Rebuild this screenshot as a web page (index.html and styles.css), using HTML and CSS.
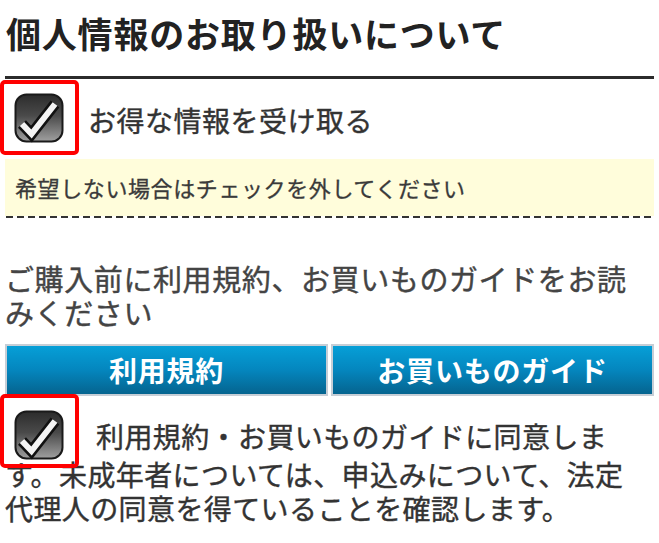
FILE: index.html
```
<!DOCTYPE html>
<html lang="ja">
<head>
<meta charset="utf-8">
<title>個人情報のお取り扱いについて</title>
<link rel="stylesheet" href="styles.css">
</head>
<body>
<div class="page">
  <h1 class="title">個人情報のお取り扱いについて</h1>
  <div class="opt">
    <span class="cb cb-opt"><svg class="cb-svg" viewBox="0 0 50 50" width="50" height="50"><defs><linearGradient id="g1" x1="0" y1="0" x2="0" y2="1"><stop offset="0" stop-color="#2c2c2c"/><stop offset="0.45" stop-color="#4a4a4a"/><stop offset="1" stop-color="#a0a0a0"/></linearGradient></defs><rect x="1.5" y="1.5" width="47" height="47" rx="11" fill="url(#g1)" stroke="#1a1a1a" stroke-width="2"/><polyline points="8,31 17.5,41 41,11" fill="none" stroke="#111" stroke-width="11" stroke-linejoin="miter" stroke-miterlimit="10"/><polyline points="8,31 17.5,41 41,11" fill="none" stroke="#f4f4f4" stroke-width="6" stroke-linejoin="miter" stroke-miterlimit="10"/></svg></span>
    <span class="opt-label">お得な情報を受け取る</span>
  </div>
  <div class="note">希望しない場合はチェックを外してください</div>
  <div class="dash"></div>
  <p class="lead">ご購入前に利用規約、お買いものガイドをお読みください</p>
  <div class="btns">
    <a class="btn">利用規約</a>
    <a class="btn">お買いものガイド</a>
  </div>
  <p class="agree"><span class="cb cb-agree"><svg class="cb-svg" viewBox="0 0 50 50" width="50" height="50"><defs><linearGradient id="g2" x1="0" y1="0" x2="0" y2="1"><stop offset="0" stop-color="#2c2c2c"/><stop offset="0.45" stop-color="#4a4a4a"/><stop offset="1" stop-color="#a0a0a0"/></linearGradient></defs><rect x="1.5" y="1.5" width="47" height="47" rx="11" fill="url(#g2)" stroke="#1a1a1a" stroke-width="2"/><polyline points="8,31 17.5,41 41,11" fill="none" stroke="#111" stroke-width="11" stroke-linejoin="miter" stroke-miterlimit="10"/><polyline points="8,31 17.5,41 41,11" fill="none" stroke="#f4f4f4" stroke-width="6" stroke-linejoin="miter" stroke-miterlimit="10"/></svg></span>利用規約・お買いものガイドに同意します。未成年者については、申込みについて、法定代理人の同意を得ていることを確認します。</p>
</div>
</body>
</html>
```
FILE: styles.css
```
html, body {
  margin: 0;
  padding: 0;
  background: #ffffff;
}

body {
  font-family: "Noto Sans CJK JP", "Noto Sans", sans-serif;
  color: #333;
}

.page {
  padding: 0 5px;
}

.title {
  margin: 0;
  padding: 8px 0 18px 1px;
  font-size: 35px;
  line-height: 50px;
  font-weight: 700;
  letter-spacing: 0.8px;
  color: #222;
  border-bottom: 3px solid #2b2b2b;
}

.opt {
  display: flex;
  align-items: center;
  padding: 14px 0 16px 9px;
}

.cb {
  position: relative;
  display: inline-block;
  width: 50px;
  height: 50px;
}

.cb-svg {
  display: block;
}

.cb::after {
  content: "";
  position: absolute;
  border: 4px solid #ff0000;
  border-radius: 5px;
  left: -14px;
  right: -15px;
}

.cb-opt::after {
  top: -13px;
  bottom: -12px;
}

.cb-agree::after {
  top: -16px;
  bottom: -8px;
}

.opt-label {
  margin-left: 24px;
  padding-top: 3px;
  font-size: 28px;
  line-height: 40px;
  letter-spacing: 0.5px;
  color: #333;
  -webkit-text-stroke: 0.4px #333;
}

.note {
  height: 57px;
  padding-left: 10px;
  background: #fffddb;
  font-size: 22px;
  line-height: 57px;
  letter-spacing: 0.6px;
  color: #3a3a3a;
  -webkit-text-stroke: 0.3px #3a3a3a;
}

.dash {
  height: 2px;
  margin-left: 1px;
  background: repeating-linear-gradient(to right, #333 0 7px, transparent 7px 11px);
}

.lead {
  margin: 43px 0 0 0;
  padding-right: 8px;
  font-size: 29px;
  line-height: 34px;
  letter-spacing: 0.6px;
  color: #444;
  -webkit-text-stroke: 0.4px #444;
}

.btns {
  display: grid;
  grid-template-columns: 1fr 1fr;
  gap: 3px;
  margin-top: 15px;
}

.btn {
  display: block;
  height: 48px;
  border: 2px solid #c6ced6;
  background: linear-gradient(to bottom, #069fd7 0%, #0486be 50%, #05648f 100%);
  color: #ffffff;
  text-align: center;
  font-size: 28px;
  line-height: 48px;
  font-weight: 700;
  letter-spacing: 0.8px;
}

.agree {
  margin: 14px 0 0 0;
  padding-right: 14px;
  font-size: 28px;
  line-height: 34px;
  letter-spacing: 0.4px;
  color: #333;
  -webkit-text-stroke: 0.4px #333;
}

.cb-agree {
  margin: 0 32px -3px 9px;
  vertical-align: -9.4px;
  -webkit-text-stroke: 0;
}
```
